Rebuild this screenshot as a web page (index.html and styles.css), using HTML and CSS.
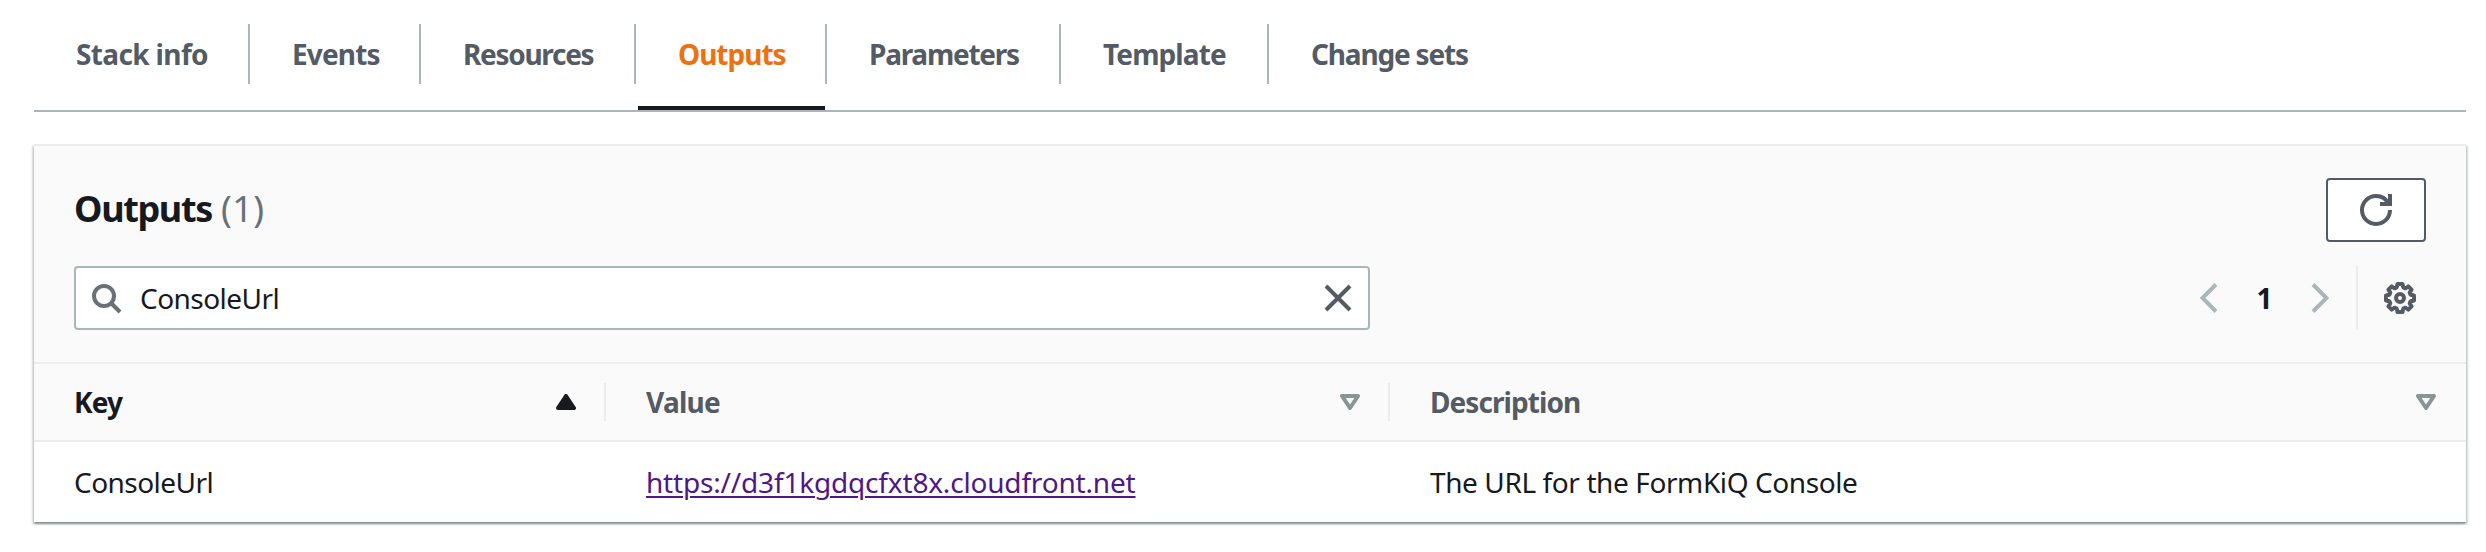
FILE: index.html
```html
<!DOCTYPE html>
<html lang="en">
<head>
<meta charset="utf-8">
<title>Stack outputs</title>
<link rel="stylesheet" href="styles.css">
</head>
<body>
<nav class="tabs">
  <a class="tab tab-info"><span>Stack info</span></a>
  <a class="tab tab-events"><span>Events</span></a>
  <a class="tab tab-resources"><span>Resources</span></a>
  <a class="tab tab-outputs active"><span>Outputs</span></a>
  <a class="tab tab-parameters"><span>Parameters</span></a>
  <a class="tab tab-template"><span>Template</span></a>
  <a class="tab tab-changes"><span>Change sets</span></a>
</nav>
<main class="card">
  <header class="card-header">
    <div class="title-row">
      <h2 class="title">Outputs <span class="count">(1)</span></h2>
      <button class="refresh" aria-label="Refresh">
        <svg width="32" height="32" viewBox="0 0 16 16" fill="none" stroke="currentColor" stroke-width="2"><path d="M10 5h5V0" /><path d="M15 8a6.96 6.96 0 0 1-7 7 6.96 6.96 0 0 1-7-7 6.96 6.96 0 0 1 7-7 6.87 6.87 0 0 1 6.3 4"/></svg>
      </button>
    </div>
    <div class="tools-row">
      <div class="search">
        <svg class="search-icon" width="32" height="32" viewBox="0 0 16 16" fill="none" stroke="currentColor" stroke-width="2"><circle cx="7" cy="7" r="5"/><path d="M15 15l-4.5-4.5"/></svg>
        <span class="query">ConsoleUrl</span>
        <svg class="clear-icon" width="32" height="32" viewBox="0 0 16 16" fill="none" stroke="currentColor" stroke-width="2"><path d="M2 2l12 12M14 2L2 14"/></svg>
      </div>
      <div class="pager">
        <svg class="arrow" width="18" height="32" viewBox="0 0 18 32" fill="none" stroke="currentColor" stroke-width="4"><path d="M16 2.500L2.500 16 16 29.500"/></svg>
        <span class="page">1</span>
        <svg class="arrow" width="18" height="32" viewBox="0 0 18 32" fill="none" stroke="currentColor" stroke-width="4"><path d="M2 2.500L15.500 16 2 29.500"/></svg>
        <span class="rule"></span>
        <svg class="gear" width="32" height="32" viewBox="0 0 32 32" fill="none" stroke="currentColor" stroke-width="4" stroke-linejoin="round"><path d="M13.500 2h5l.8 3.400 2.100.9L24.300 4.400 27.600 7.700 25.700 10.600l.9 2.100 3.400.8v5l-3.400.8-.9 2.100 1.900 2.900-3.300 3.300-2.900-1.900-2.100.9-.8 3.400h-5l-.8-3.400-2.100-.9-2.900 1.900-3.300-3.300 1.900-2.900-.9-2.100L2 18.500v-5l3.400-.8.9-2.100L4.400 7.700 7.700 4.400l2.900 1.900 2.100-.9z"/><circle cx="16" cy="16" r="4"/></svg>
      </div>
    </div>
  </header>
  <div class="row head">
    <div class="cell sorted"><span class="key">Key</span>
      <svg width="20" height="16" viewBox="0 0 20 16"><path d="M10 2L18 14H2z" fill="currentColor" stroke="currentColor" stroke-width="4" stroke-linejoin="round"/></svg>
    </div>
    <div class="cell"><span class="value">Value</span>
      <svg class="sort" width="20" height="16" viewBox="0 0 20 16"><path d="M2 2H18L10 14z" fill="none" stroke="currentColor" stroke-width="4" stroke-linejoin="round"/></svg>
    </div>
    <div class="cell"><span class="description">Description</span>
      <svg class="sort" width="20" height="16" viewBox="0 0 20 16"><path d="M2 2H18L10 14z" fill="none" stroke="currentColor" stroke-width="4" stroke-linejoin="round"/></svg>
    </div>
  </div>
  <div class="row body">
    <div class="cell"><span class="name">ConsoleUrl</span></div>
    <div class="cell"><a class="link">https://d3f1kgdqcfxt8x.cloudfront.net</a></div>
    <div class="cell"><span class="summary">The URL for the FormKiQ Console</span></div>
  </div>
</main>
</body>
</html>
```
FILE: styles.css
```css
* { box-sizing: border-box; }
body {
  margin: 0;
  min-height: 552px;
  padding: 0 20px 0 34px;
  background: #fff;
  color: #16191f;
  font: 400 28px/44px "Noto Sans", "Open Sans", sans-serif;
}
svg { display: block; flex: none; }

.tabs {
  display: flex;
  align-items: flex-start;
  height: 112px;
  padding-top: 24px;
  border-bottom: 2px solid #aab7b8;
}
.tab {
  display: flex;
  align-items: flex-start;
  height: 86px;
  color: #545b64;
  font-weight: 700;
  white-space: nowrap;
}
.tab span {
  flex: 1;
  height: 60px;
  padding-left: 42px;
  border-right: 2px solid #aab7b8;
  line-height: 61px;
}
.tab-info { width: 216px; letter-spacing: -.64px; }
.tab-events { width: 171px; letter-spacing: -.84px; }
.tab-resources { width: 215px; letter-spacing: -1.3px; }
.tab-outputs { width: 191px; letter-spacing: -1px; }
.tab-parameters { width: 234px; letter-spacing: -1.25px; }
.tab-template { width: 208px; letter-spacing: -.89px; }
.tab-changes { letter-spacing: -1.18px; }
.tab-changes span { border-right: 0; }
.tab.active {
  color: #ec7211;
  background: linear-gradient(#16191f, #16191f) 2px 82px / 187px 4px no-repeat;
}

.card {
  margin-top: 32px;
  height: 378px;
  border-top: 2px solid #eaeded;
  background: #fff;
  box-shadow: 0 2px 2px 0 rgba(0, 28, 36, .3), 2px 2px 2px 0 rgba(0, 28, 36, .15), -2px 2px 2px 0 rgba(0, 28, 36, .15);
}
.card-header {
  height: 218px;
  padding: 32px 40px 0;
  background: #fafafa;
  border-bottom: 2px solid #eaeded;
}
.title-row {
  display: flex;
  justify-content: space-between;
  height: 64px;
}
.title {
  margin: 0;
  font-size: 36px;
  line-height: 62px;
  letter-spacing: -1.35px;
}
.count { margin-left: 1px; color: #687078; font-weight: 400; letter-spacing: .5px; }
.refresh {
  display: flex;
  align-items: center;
  justify-content: center;
  width: 100px;
  height: 64px;
  padding: 0;
  border: 2px solid #545b64;
  border-radius: 4px;
  background: #fff;
  color: #545b64;
}
.tools-row {
  display: flex;
  justify-content: space-between;
  margin-top: 24px;
}
.search {
  display: flex;
  align-items: center;
  width: 1296px;
  height: 64px;
  padding: 0 14px;
  border: 2px solid #aab7b8;
  border-radius: 4px;
  background: #fff;
}
.search-icon { color: #687078; }
.clear-icon { color: #545b64; }
.query { flex: 1; margin-left: 18px; letter-spacing: -.55px; }
.pager { display: flex; align-items: center; height: 64px; padding-right: 10px; }
.arrow { color: #aab7b8; }
.page { width: 93px; text-align: center; font-weight: 700; }
.rule { width: 2px; height: 64px; margin: 0 26px 0 27px; background: #eaeded; }
.gear { color: #545b64; }

.row {
  display: grid;
  grid-template-columns: 572px 784px 1fr;
  align-items: center;
}
.head {
  height: 78px;
  background: #fafafa;
  border-bottom: 2px solid #eaeded;
  color: #545b64;
  font-weight: 700;
}
.cell {
  display: flex;
  align-items: center;
  justify-content: space-between;
  padding-left: 40px;
}
.head .cell { height: 38px; padding-right: 28px; border-right: 2px solid #eaeded; }
.head .cell:last-child { padding-right: 30px; border-right: 0; }
.head .sorted { color: #16191f; }
.sort { color: #879596; }
.body { height: 80px; }
.key { letter-spacing: -.85px; }
.value { letter-spacing: -.75px; }
.description { letter-spacing: -.93px; }
.name { letter-spacing: -.55px; }
.link {
  color: #4f1787;
  letter-spacing: -.18px;
  text-decoration: underline;
  text-decoration-thickness: 2px;
  text-underline-offset: 3px;
}
.summary { letter-spacing: -.4px; }
```
